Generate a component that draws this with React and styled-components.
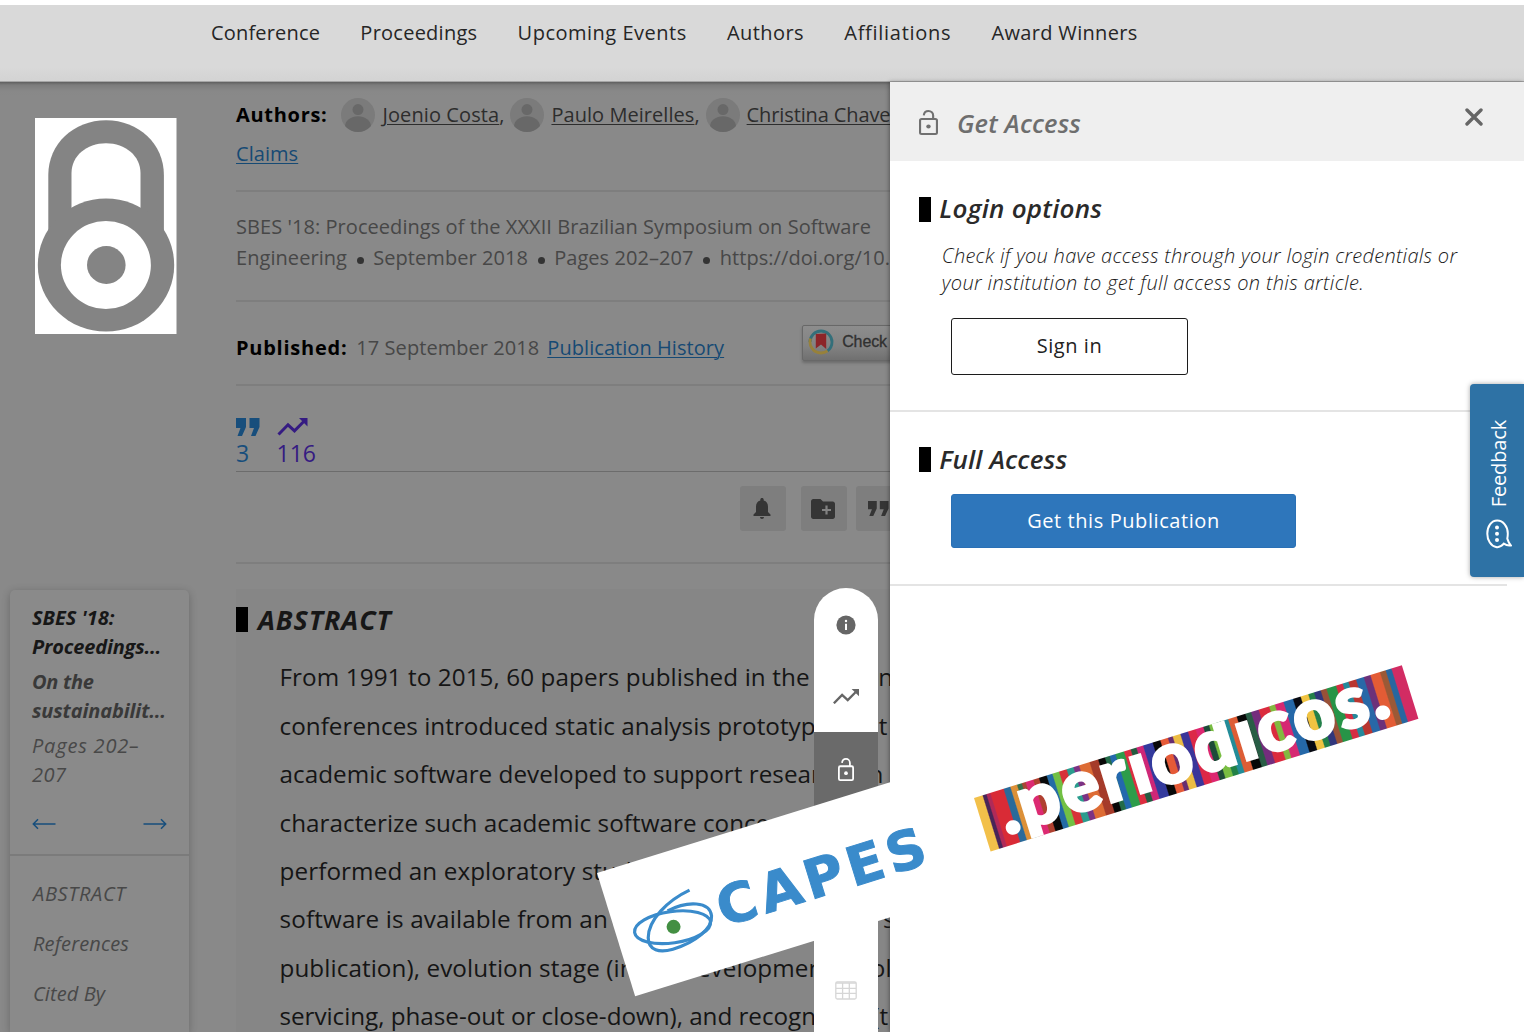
import React from "react";
import styled, { createGlobalStyle } from "styled-components";

const GlobalStyle = createGlobalStyle`
  *, *::before, *::after { box-sizing: border-box; }
  body {
    margin: 0;
    background: #fff;
    font-family: "Open Sans", "Noto Sans", sans-serif;
    font-size: 20px;
  }
  svg { display: block; flex: none; }
`;

/* ---------- shell ---------- */

const Screen = styled.div`
  position: relative;
  display: flex;
  flex-direction: column;
  width: 1524px;
  height: 1032px;
  padding-top: 5px;
  overflow: hidden;
  background: #fff;
`;

const NavBar = styled.nav`
  position: relative;
  flex: none;
  display: flex;
  gap: 40.3px;
  height: 77px;
  padding: 8px 0 0 211px;
  background: linear-gradient(#d9d9d9 82%, #d3d3d3);
  border-bottom: 1px solid #a6a6a6;
`;

const NavItem = styled.a`
  line-height: 40px;
  color: #262626;
  white-space: nowrap;
  letter-spacing: ${(p) => p.$track}px;
`;

const Body = styled.div`
  flex: 1;
  display: flex;
  min-height: 0;
  background: linear-gradient(#5f5f5f 0, #7c7c7c 3px, #888 9px, #898989 14px);
`;

/* ---------- left column ---------- */

const LeftColumn = styled.aside`
  flex: none;
  width: 190px;
  display: flex;
  flex-direction: column;
`;

const LockBadge = styled.div`
  flex: none;
  width: 142px;
  height: 216px;
  margin: 36px 0 0 34.5px;
`;

const TocCard = styled.div`
  flex: 1;
  width: 179px;
  margin: 256px 0 0 10px;
  border-radius: 5px 5px 0 0;
  background: #8a8a8a;
  box-shadow: 0 2px 9px rgba(0, 0, 0, 0.24);
`;

const TocHead = styled.div`
  height: 266px;
  padding: 14px 22px 0;
  border-bottom: 2px solid #7b7b7b;
`;

const TocText = styled.p`
  margin: 0 0 6.8px;
  line-height: 28.6px;
  font-style: italic;
  font-weight: ${(p) => p.$weight || 400};
  color: ${(p) => p.$color};
  white-space: nowrap;
`;

const Tracked = styled.span`
  letter-spacing: ${(p) => p.$track}px;
`;

const TocArrows = styled.div`
  display: flex;
  justify-content: space-between;
  margin-top: 28.5px;
`;

const TocLinks = styled.div`
  display: flex;
  flex-direction: column;
  padding: 12.5px 0 0 23px;
`;

const TocLink = styled.a`
  height: 50px;
  line-height: 50px;
  font-style: italic;
  color: #484848;
  letter-spacing: ${(p) => p.$track}px;
`;

/* ---------- article ---------- */

const Article = styled.main`
  flex: none;
  width: 701px;
  padding: 12px 0 0 46px;
  overflow: hidden;
  white-space: nowrap;
`;

const Block = styled.section`
  height: ${(p) => p.$h}px;
  padding-top: ${(p) => p.$top || 0}px;
  border-bottom: ${(p) => p.$line || "2px solid #7e7e7e"};
`;

const Row = styled.div`
  display: flex;
  align-items: center;
  height: ${(p) => p.$h}px;
`;

const Label = styled.strong`
  font-weight: 700;
  color: #000;
  letter-spacing: ${(p) => p.$track}px;
`;

const AuthorList = styled.div`
  display: flex;
  gap: 6px;
  margin: 0 0 0 14px;
`;

const Author = styled.span`
  display: flex;
  align-items: center;
  gap: 7px;
  color: #2d2d2d;
  svg { margin-top: 1px; }
`;

const AuthorLink = styled.a`
  letter-spacing: ${(p) => p.$track}px;
  text-decoration: underline;
  text-decoration-thickness: 1px;
  text-underline-offset: 2px;
`;

const BlueLink = styled.a`
  color: #164a74;
  letter-spacing: 0.06px;
  text-decoration: underline;
  text-decoration-thickness: 1px;
  text-underline-offset: 2px;
`;

const Meta = styled.div`
  display: flex;
  align-items: center;
  height: 31px;
  line-height: 31px;
  color: #474747;
  letter-spacing: 0.06px;
`;

const Dot = styled.i`
  flex: none;
  width: 7px;
  height: 7px;
  margin: 5px 9.6px 0;
  border-radius: 50%;
  background: #333;
`;

const DateText = styled.span`
  margin: 0 8px 0 9px;
  color: #474747;
  letter-spacing: 0.06px;
`;

const CheckBadge = styled.div`
  flex: none;
  display: flex;
  align-items: center;
  gap: 8px;
  width: 120px;
  height: 36px;
  margin: -9px 0 0 78px;
  padding: 0 0 2px 5px;
  border: 1px solid #686868;
  border-radius: 2px;
  background: linear-gradient(#8d8d8d, #828282 60%, #707070);
  box-shadow: 0 2px 3px rgba(0, 0, 0, 0.22);
  color: #303030;
  font: 16px "Liberation Sans", sans-serif;
  letter-spacing: -0.1px;
  -webkit-text-stroke: 0.3px #303030;
`;

const Metrics = styled.div`
  display: flex;
  gap: 16.5px;
`;

const Metric = styled.a`
  display: flex;
  flex-direction: column;
  font-size: 23px;
  line-height: 35px;
  color: ${(p) => p.$color};
`;

const Tools = styled.div`
  display: flex;
  gap: 9px;
  padding-left: 503.5px;
`;

const Tool = styled.button`
  flex: none;
  display: grid;
  place-items: center;
  width: 46px;
  height: 45px;
  margin: 0 ${(p) => p.$after || 0}px 0 0;
  padding: 0 1px 0 0;
  border: 0;
  border-radius: 3px;
  background: #7e7e7e;
`;

const AbstractBox = styled.section`
  height: 460px;
  margin-top: 25px;
  padding-top: 11px;
  background: #868686;
`;

const Heading = styled.h2`
  display: flex;
  align-items: center;
  gap: ${(p) => p.$gap || 8.5}px;
  height: 40px;
  margin: 0;
  font-size: ${(p) => p.$size || 26}px;
  font-style: italic;
  font-weight: ${(p) => p.$weight || 600};
  color: ${(p) => p.$color || "#2a2a2a"};
  letter-spacing: ${(p) => p.$track}px;
  line-height: 40px;
  &::before {
    content: "";
    width: 12px;
    height: 25px;
    margin-top: ${(p) => p.$drop || 0}px;
    background: #000;
  }
`;

const Paragraph = styled.div`
  padding: 13.4px 0 0 43.5px;
  font-size: 24.25px;
  line-height: 48.4px;
  color: #151515;
`;

const TextLine = styled.div`
  letter-spacing: ${(p) => p.$track || 0}px;
`;

/* ---------- access panel ---------- */

const Panel = styled.aside`
  position: relative;
  flex: none;
  width: 634px;
  margin-left: -0.6px;
  background: #fff;
  box-shadow: -1px 0 4px rgba(0, 0, 0, 0.35);
`;

const PanelHeader = styled.header`
  display: flex;
  align-items: center;
  height: 79px;
  padding: 2px 41px 0 29px;
  background: #efefef;
`;

const PanelTitle = styled.h1`
  flex: 1;
  margin: 0 0 0 18.6px;
  font-size: 25.5px;
  font-style: italic;
  font-weight: 600;
  line-height: 40px;
  color: #6e6e6e;
  letter-spacing: 0.15px;
`;

const CloseButton = styled.button`
  padding: 0;
  margin-top: -11px;
  border: 0;
  background: none;
`;

const PanelSection = styled.section`
  height: ${(p) => p.$h}px;
  margin-right: ${(p) => p.$right || 0}px;
  padding: 27px 0 0 28.4px;
  border-bottom: 2px solid #e4e4e4;
`;

const Hint = styled.p`
  margin: 14px 0 0 23px;
  line-height: 27px;
  font-style: italic;
  font-weight: 300;
  color: #1a1a1a;
`;

const Button = styled.button`
  display: grid;
  place-items: center;
  width: ${(p) => p.$w}px;
  height: ${(p) => p.$h}px;
  margin: ${(p) => p.$top}px 0 0 32.2px;
  padding: 0 0 ${(p) => (p.$primary ? 1 : 3)}px;
  border: ${(p) => (p.$primary ? "1px solid #2a70b5" : "1.5px solid #1c1c1c")};
  border-radius: 3px;
  background: ${(p) => (p.$primary ? "#2e76bb" : "#fff")};
  color: ${(p) => (p.$primary ? "#fff" : "#222")};
  font: 20px "Open Sans", sans-serif;
  letter-spacing: 0.58px;
`;

/* ---------- floating pieces ---------- */

const Rail = styled.div`
  position: absolute;
  left: 814px;
  top: 588px;
  width: 63.5px;
  height: 460px;
  display: flex;
  flex-direction: column;
  align-items: center;
  border-radius: 32px 32px 0 0;
  background: #fff;
  overflow: hidden;
`;

const RailItem = styled.div`
  flex: none;
  display: grid;
  place-items: center;
  width: 100%;
  height: ${(p) => p.$h || 72}px;
  padding-bottom: ${(p) => p.$lift || 0}px;
  background: ${(p) => (p.$active ? "#6a6a6a" : "transparent")};
`;

const FeedbackTab = styled.div`
  position: absolute;
  left: 1470px;
  top: 384px;
  width: 54px;
  height: 193px;
  display: flex;
  flex-direction: column;
  align-items: center;
  gap: 12px;
  padding: 36px 0 0 4px;
  border-radius: 4px 0 0 4px;
  background: #2e72a5;
  box-shadow: 0 0 5px rgba(0, 0, 0, 0.35);
`;

const FeedbackText = styled.span`
  writing-mode: vertical-rl;
  transform: rotate(180deg);
  color: #fff;
  line-height: 26px;
  letter-spacing: -0.15px;
`;

const CapesBanner = styled.div`
  position: absolute;
  left: 597px;
  top: 873px;
  width: 370px;
  height: 129px;
  display: flex;
  align-items: center;
  padding: 0 0 0 16px;
  background: #fff;
  transform: rotate(-17.2deg);
  transform-origin: 0 0;
  svg { margin-top: 4px; }
`;

const CapesName = styled.span`
  color: #3a8bcb;
  font: 700 54px/60px "DejaVu Sans", sans-serif;
  letter-spacing: 4.8px;
  margin: 13px 0 0 5px;
  -webkit-text-stroke: 1px #3a8bcb;
`;

const Strip = styled.div`
  position: absolute;
  left: 974px;
  top: 798px;
  width: 448px;
  height: 56px;
  overflow: hidden;
  background: ${(p) => p.$stripes};
  transform: rotate(-17.25deg);
  transform-origin: 0 0;
`;

const StripName = styled.div`
  margin: -25px 0 0 20px;
  color: #fff;
  font: 900 72px/84px Lato, sans-serif;
  letter-spacing: 3.2px;
  white-space: nowrap;
  -webkit-text-stroke: 3px #fff;
`;

/* ---------- icons ---------- */

const Avatar = () => (
  <svg width="34" height="34" viewBox="0 0 34 34">
    <clipPath id="round"><circle cx="17" cy="17" r="17" /></clipPath>
    <circle cx="17" cy="17" r="17" fill="#7b7b7b" />
    <circle cx="17" cy="11.6" r="5.5" fill="#686868" />
    <ellipse cx="17" cy="28.5" rx="13" ry="10.3" fill="#686868" clipPath="url(#round)" />
  </svg>
);

const Quotes = ({ width, height, color }) => (
  <svg width={width} height={height} viewBox="0 0 24 18" preserveAspectRatio="none" fill={color}>
    <path d="M0 0H10V9L6 18H1.5L4.5 10H0ZM13.5 0H23.5V9L19.5 18H15L18 10H13.5Z" />
  </svg>
);

const Trend = ({ width, height = width * 0.6, color, stroke = 2.7 }) => (
  <svg width={width} height={height} viewBox="0 0 30 18" fill="none">
    <path d="M1 16.5 10.5 6.8 17 12.8 26 3.8" stroke={color} strokeWidth={stroke} />
    <path d="M21.5 0H30V8.5Z" fill={color} />
  </svg>
);

const OpenLock = ({ width, height, color }) => (
  <svg width={width} height={height} viewBox="0 0 18 25" preserveAspectRatio="none" fill="none" stroke={color} strokeWidth="2">
    <rect x="1" y="9" width="16" height="15" rx="1.5" />
    <path d="M4.5 5.3C4.8 2.7 6.6 1 9 1s4.4 1.9 4.4 4.5V9" />
    <circle cx="9" cy="16.5" r="2.1" fill={color} stroke="none" />
  </svg>
);

const Arrow = ({ flip }) => (
  <svg width="24" height="12" viewBox="0 0 24 12" fill="none" stroke="#174e7c" strokeWidth="1.5" transform={flip ? "scale(-1 1)" : undefined}>
    <path d="M23.5 6H1.5M6 1.3 1.3 6 6 10.7" />
  </svg>
);

const BigLock = () => (
  <svg width="142" height="216" viewBox="34.5 118 142 216">
    <rect x="34.5" y="118" width="141.5" height="216" fill="#fff" />
    <path d="M47.8 250V175C47.8 144 73 120.3 105.6 120.3S163.4 144 163.4 175V250Z" fill="#848484" />
    <path d="M71 230V173C71 156 86 143.2 105.5 143.2S140 156 140 173V230Z" fill="#fff" />
    <ellipse cx="105.5" cy="265" rx="68.2" ry="66.6" fill="#848484" />
    <ellipse cx="105.4" cy="265" rx="45" ry="44" fill="#fff" />
    <ellipse cx="105.8" cy="265" rx="19.3" ry="18.9" fill="#848484" />
  </svg>
);

const Crossmark = () => (
  <svg width="26" height="26" viewBox="0 0 26 26" fill="none">
    <path d="M2 13A11 11 0 0 1 24 13A11 11 0 0 1 19.5 21.9" stroke="#336f7a" strokeWidth="2.8" />
    <path d="M2.6 9.5A11 11 0 0 0 13 24A11 11 0 0 0 19.5 21.9" stroke="#97813a" strokeWidth="2.8" />
    <path d="M7.8 5 18.2 4.5V20L13 15.5 7.8 19.5Z" fill="#8c2529" />
  </svg>
);

const Bell = () => (
  <svg width="18" height="21" viewBox="0 0 18 21" fill="#353535">
    <path d="M9 0C10 0 10.7.7 10.7 1.7V2.5C13.6 3.2 15 5.7 15 8.7V14L17.5 16.5V18H.5V16.5L3 14V8.7C3 5.7 4.4 3.2 7.3 2.5V1.7C7.3.7 8 0 9 0ZM7 19H11C11 20.2 10.1 21 9 21S7 20.2 7 19Z" />
  </svg>
);

const FolderPlus = () => (
  <svg width="24" height="20" viewBox="0 0 24 20">
    <path d="M2.3 0H9.5L12 2.5H21.7C23 2.5 24 3.5 24 4.8V17.5C24 18.9 23 20 21.7 20H2.3C1 20 0 18.9 0 17.5V2.5C0 1 1 0 2.3 0Z" fill="#353535" />
    <path d="M15.5 6.5V15.5M11 11H20" stroke="#828282" strokeWidth="2.2" />
  </svg>
);

const Info = () => (
  <svg width="20" height="20" viewBox="0 0 20 20">
    <circle cx="10" cy="10" r="9.6" fill="#666" />
    <path d="M10 8.8V15" stroke="#fff" strokeWidth="2" />
    <circle cx="10" cy="6" r="1.2" fill="#fff" />
  </svg>
);

const Table = () => (
  <svg width="22" height="19" viewBox="0 0 22 19" fill="none" stroke="#d6d6d6" strokeWidth="1.3">
    <rect x="0.8" y="0.8" width="20.4" height="17.2" rx="1.5" />
    <path d="M1 2H21M1 7.3H21M1 12.3H21M7.6 2V18M14.3 2V18" />
  </svg>
);

const SpeechBubble = () => (
  <svg width="26" height="30" viewBox="0 0 26 30" fill="none" stroke="#fff" strokeWidth="2">
    <path d="M21.3 19.6C22.2 22.6 23 24.3 24.8 26.4 22.3 26.8 20 26.2 17.8 24.7 15.5 27.4 12.8 28.6 10 28 4.7 26.8 1.3 21 1.3 14.7 1.3 7.4 5.3 1.5 11.2 1.5S21.8 7.3 21.8 14.4C21.8 16.3 21.6 18 21.3 19.6Z" />
    <g fill="#fff" stroke="none">
      <circle cx="11" cy="8.5" r="2" />
      <circle cx="11" cy="14.8" r="2" />
      <circle cx="11" cy="21.1" r="2" />
    </g>
  </svg>
);

const CapesEye = () => (
  <svg width="84" height="70" viewBox="150 315 252 210" fill="none" stroke="#3a8bcb" strokeWidth="9.5" transform="rotate(17.2)">
    <ellipse cx="277" cy="442" rx="115" ry="47" transform="rotate(-8 277 442)" />
    <path d="M328 331C262 362 204 420 204 474C205 512 238 520 278 508C345 488 397 446 394 408C389 364 322 362 262 393" />
    <circle cx="280" cy="441" r="21" fill="#438f42" stroke="none" />
  </svg>
);

/* ---------- data ---------- */

const NAV = [
  ["Conference", 0.17],
  ["Proceedings", 0.25],
  ["Upcoming Events", 0.5],
  ["Authors", 0.42],
  ["Affiliations", 0.72],
  ["Award Winners", 0.32],
];

const ABSTRACT = [
  ["From 1991 to 2015, 60 papers published in the ASE an", 0.09],
  ["conferences introduced static analysis prototypes as t", 0.03],
  ["academic software developed to support research on", 0.03],
  ["characterize such academic software concerning", 0.03],
  ["performed an exploratory study to check", 0.1],
  ["software is available from an informed site (URL and s", 0.14],
  ["publication), evolution stage (initial development, evol", 0.08],
  ["servicing, phase-out or close-down), and recognition (t", -0.04],
];

const STRIPES = [
  ["#f2c04a", 9], ["#482558", 13], ["#b02a58", 17], ["#d92b36", 31], ["#2a6a9a", 38],
  ["#dc9038", 45], ["#35704a", 50], ["#a84634", 54], ["#dc2a72", 62], ["#b04030", 68],
  ["#090909", 76], ["#246ba5", 82], ["#72c044", 89], ["#d73238", 97], ["#2b9c8e", 104],
  ["#7c3284", 110], ["#dd6c35", 121], ["#a53b2a", 130], ["#080808", 137], ["#246b48", 142],
  ["#2368ad", 148], ["#2d9c4a", 157], ["#dc2d40", 164], ["#245b40", 170], ["#cf2777", 177],
  ["#333a9d", 187], ["#080808", 195], ["#e55a38", 203], ["#672d70", 208], ["#ecbc44", 216],
  ["#3a359a", 224], ["#dc2847", 232], ["#dc2770", 240], ["#1d4b39", 246], ["#78bd42", 254],
  ["#228146", 260], ["#238c98", 266], ["#dd5d35", 275], ["#080808", 284], ["#285d45", 290],
  ["#742d7d", 298], ["#db2b3e", 309], ["#83b940", 315], ["#d62972", 324], ["#2568a8", 334],
  ["#080a12", 342], ["#f0c342", 350], ["#24804a", 356], ["#31367c", 363], ["#985138", 369],
  ["#279447", 379], ["#d62d42", 386], ["#25899b", 392], ["#b93630", 400], ["#2868a7", 408],
  ["#6c3179", 415], ["#e35c35", 425], ["#9b5936", 431], ["#2767a0", 437], ["#d22c63", 448],
];

const stripes = `linear-gradient(90deg, ${STRIPES.map(
  ([color, end], i) => `${color} ${i ? STRIPES[i - 1][1] + 0.6 : 0}px ${end - 0.6}px`
).join(", ")})`;

export default function App() {
  return (
    <>
      <GlobalStyle />
      <Screen>
        <NavBar>
          {NAV.map(([name, track]) => (
            <NavItem key={name} $track={track}>{name}</NavItem>
          ))}
        </NavBar>

        <Body>
          <LeftColumn>
            <LockBadge><BigLock /></LockBadge>
            <TocCard>
              <TocHead>
                <TocText $weight={700} $color="#171717">
                  SBES '18:<br /><Tracked $track={-0.18}>Proceedings...</Tracked>
                </TocText>
                <TocText $weight={700} $color="#393939">
                  <Tracked $track={-0.3}>On the</Tracked><br /><Tracked $track={-0.13}>sustainabilit...</Tracked>
                </TocText>
                <TocText $color="#484848">
                  <Tracked $track={0.8}>Pages 202–</Tracked><br /><Tracked $track={0.5}>207</Tracked>
                </TocText>
                <TocArrows><Arrow /><Arrow flip /></TocArrows>
              </TocHead>
              <TocLinks>
                <TocLink $track={0.67}>ABSTRACT</TocLink>
                <TocLink $track={0.14}>References</TocLink>
                <TocLink $track={0.09}>Cited By</TocLink>
              </TocLinks>
            </TocCard>
          </LeftColumn>

          <Article>
            <Block $h={98}>
              <Row $h={40}>
                <Label $track={0.7}>Authors:</Label>
                <AuthorList>
                  <Author><Avatar /><span><AuthorLink $track={0.1}>Joenio Costa</AuthorLink>,</span></Author>
                  <Author><Avatar /><span><AuthorLink $track={0.05}>Paulo Meirelles</AuthorLink>,</span></Author>
                  <Author><Avatar /><AuthorLink $track={-0.12}>Christina Chave</AuthorLink></Author>
                </AuthorList>
              </Row>
              <Row $h={39}><BlueLink>Claims</BlueLink></Row>
            </Block>
            <Block $h={110} $top={19}>
              <Meta>SBES '18: Proceedings of the XXXII Brazilian Symposium on Software</Meta>
              <Meta>
                Engineering<Dot />September 2018<Dot />Pages 202–207<Dot />https://doi.org/10.
              </Meta>
            </Block>
            <Block $h={84} $top={25}>
              <Row $h={40}>
                <Label $track={0.75}>Published:</Label>
                <DateText>17 September 2018</DateText>
                <BlueLink>Publication History</BlueLink>
                <CheckBadge><Crossmark />Check</CheckBadge>
              </Row>
            </Block>
            <Block $h={85.5} $top={32} $line="1.5px solid #6c6c6c">
              <Metrics>
                <Metric $color="#174e7c"><Quotes width={24} height={18} color="#174e7c" />3</Metric>
                <Metric $color="#351b82"><Trend width={31} height={18} color="#351b82" stroke={3} />116</Metric>
              </Metrics>
            </Block>
            <Block $h={92.5} $top={14.5}>
              <Tools>
                <Tool $after={6}><Bell /></Tool>
                <Tool><FolderPlus /></Tool>
                <Tool><Quotes width={21} height={15} color="#353535" /></Tool>
              </Tools>
            </Block>
            <AbstractBox>
              <Heading $size={27} $weight={700} $track={0.9} $gap={10} $drop={-2} $color="#171717">ABSTRACT</Heading>
              <Paragraph>
                {ABSTRACT.map(([line, track]) => (
                  <TextLine key={line} $track={track}>{line}</TextLine>
                ))}
              </Paragraph>
            </AbstractBox>
          </Article>

          <Panel>
            <PanelHeader>
              <OpenLock width={19} height={25} color="#707070" />
              <PanelTitle>Get Access</PanelTitle>
              <CloseButton>
                <svg width="18" height="18" viewBox="0 0 18 18" stroke="#666" strokeWidth="3.4" strokeLinecap="round">
                  <path d="M2 2 16 16M16 2 2 16" />
                </svg>
              </CloseButton>
            </PanelHeader>
            <PanelSection $h={251}>
              <Heading $track={0.24} $drop={2}>Login options</Heading>
              <Hint>
                <Tracked $track={0.28}>Check if you have access through your login credentials or</Tracked><br />
                <Tracked $track={0.36}>your institution to get full access on this article.</Tracked>
              </Hint>
              <Button $w={237} $h={57} $top={22}>Sign in</Button>
            </PanelSection>
            <PanelSection $h={174} $right={17}>
              <Heading $track={0.13} $drop={1}>Full Access</Heading>
              <Button $primary $w={345} $h={54} $top={15}>Get this Publication</Button>
            </PanelSection>
          </Panel>
        </Body>

        <Rail>
          <RailItem $h={74}><Info /></RailItem>
          <RailItem $h={70} $lift={1}><Trend width={26} color="#666" /></RailItem>
          <RailItem $active $h={76} $lift={2}><OpenLock width={16} height={23} color="#fff" /></RailItem>
          <RailItem $h={144} />
          <RailItem $h={76}><Table /></RailItem>
        </Rail>

        <FeedbackTab>
          <FeedbackText>Feedback</FeedbackText>
          <SpeechBubble />
        </FeedbackTab>

        <CapesBanner>
          <CapesEye />
          <CapesName>CAPES</CapesName>
        </CapesBanner>

        <Strip $stripes={stripes}>
          <StripName>.perıodıcos.</StripName>
        </Strip>
      </Screen>
    </>
  );
}
